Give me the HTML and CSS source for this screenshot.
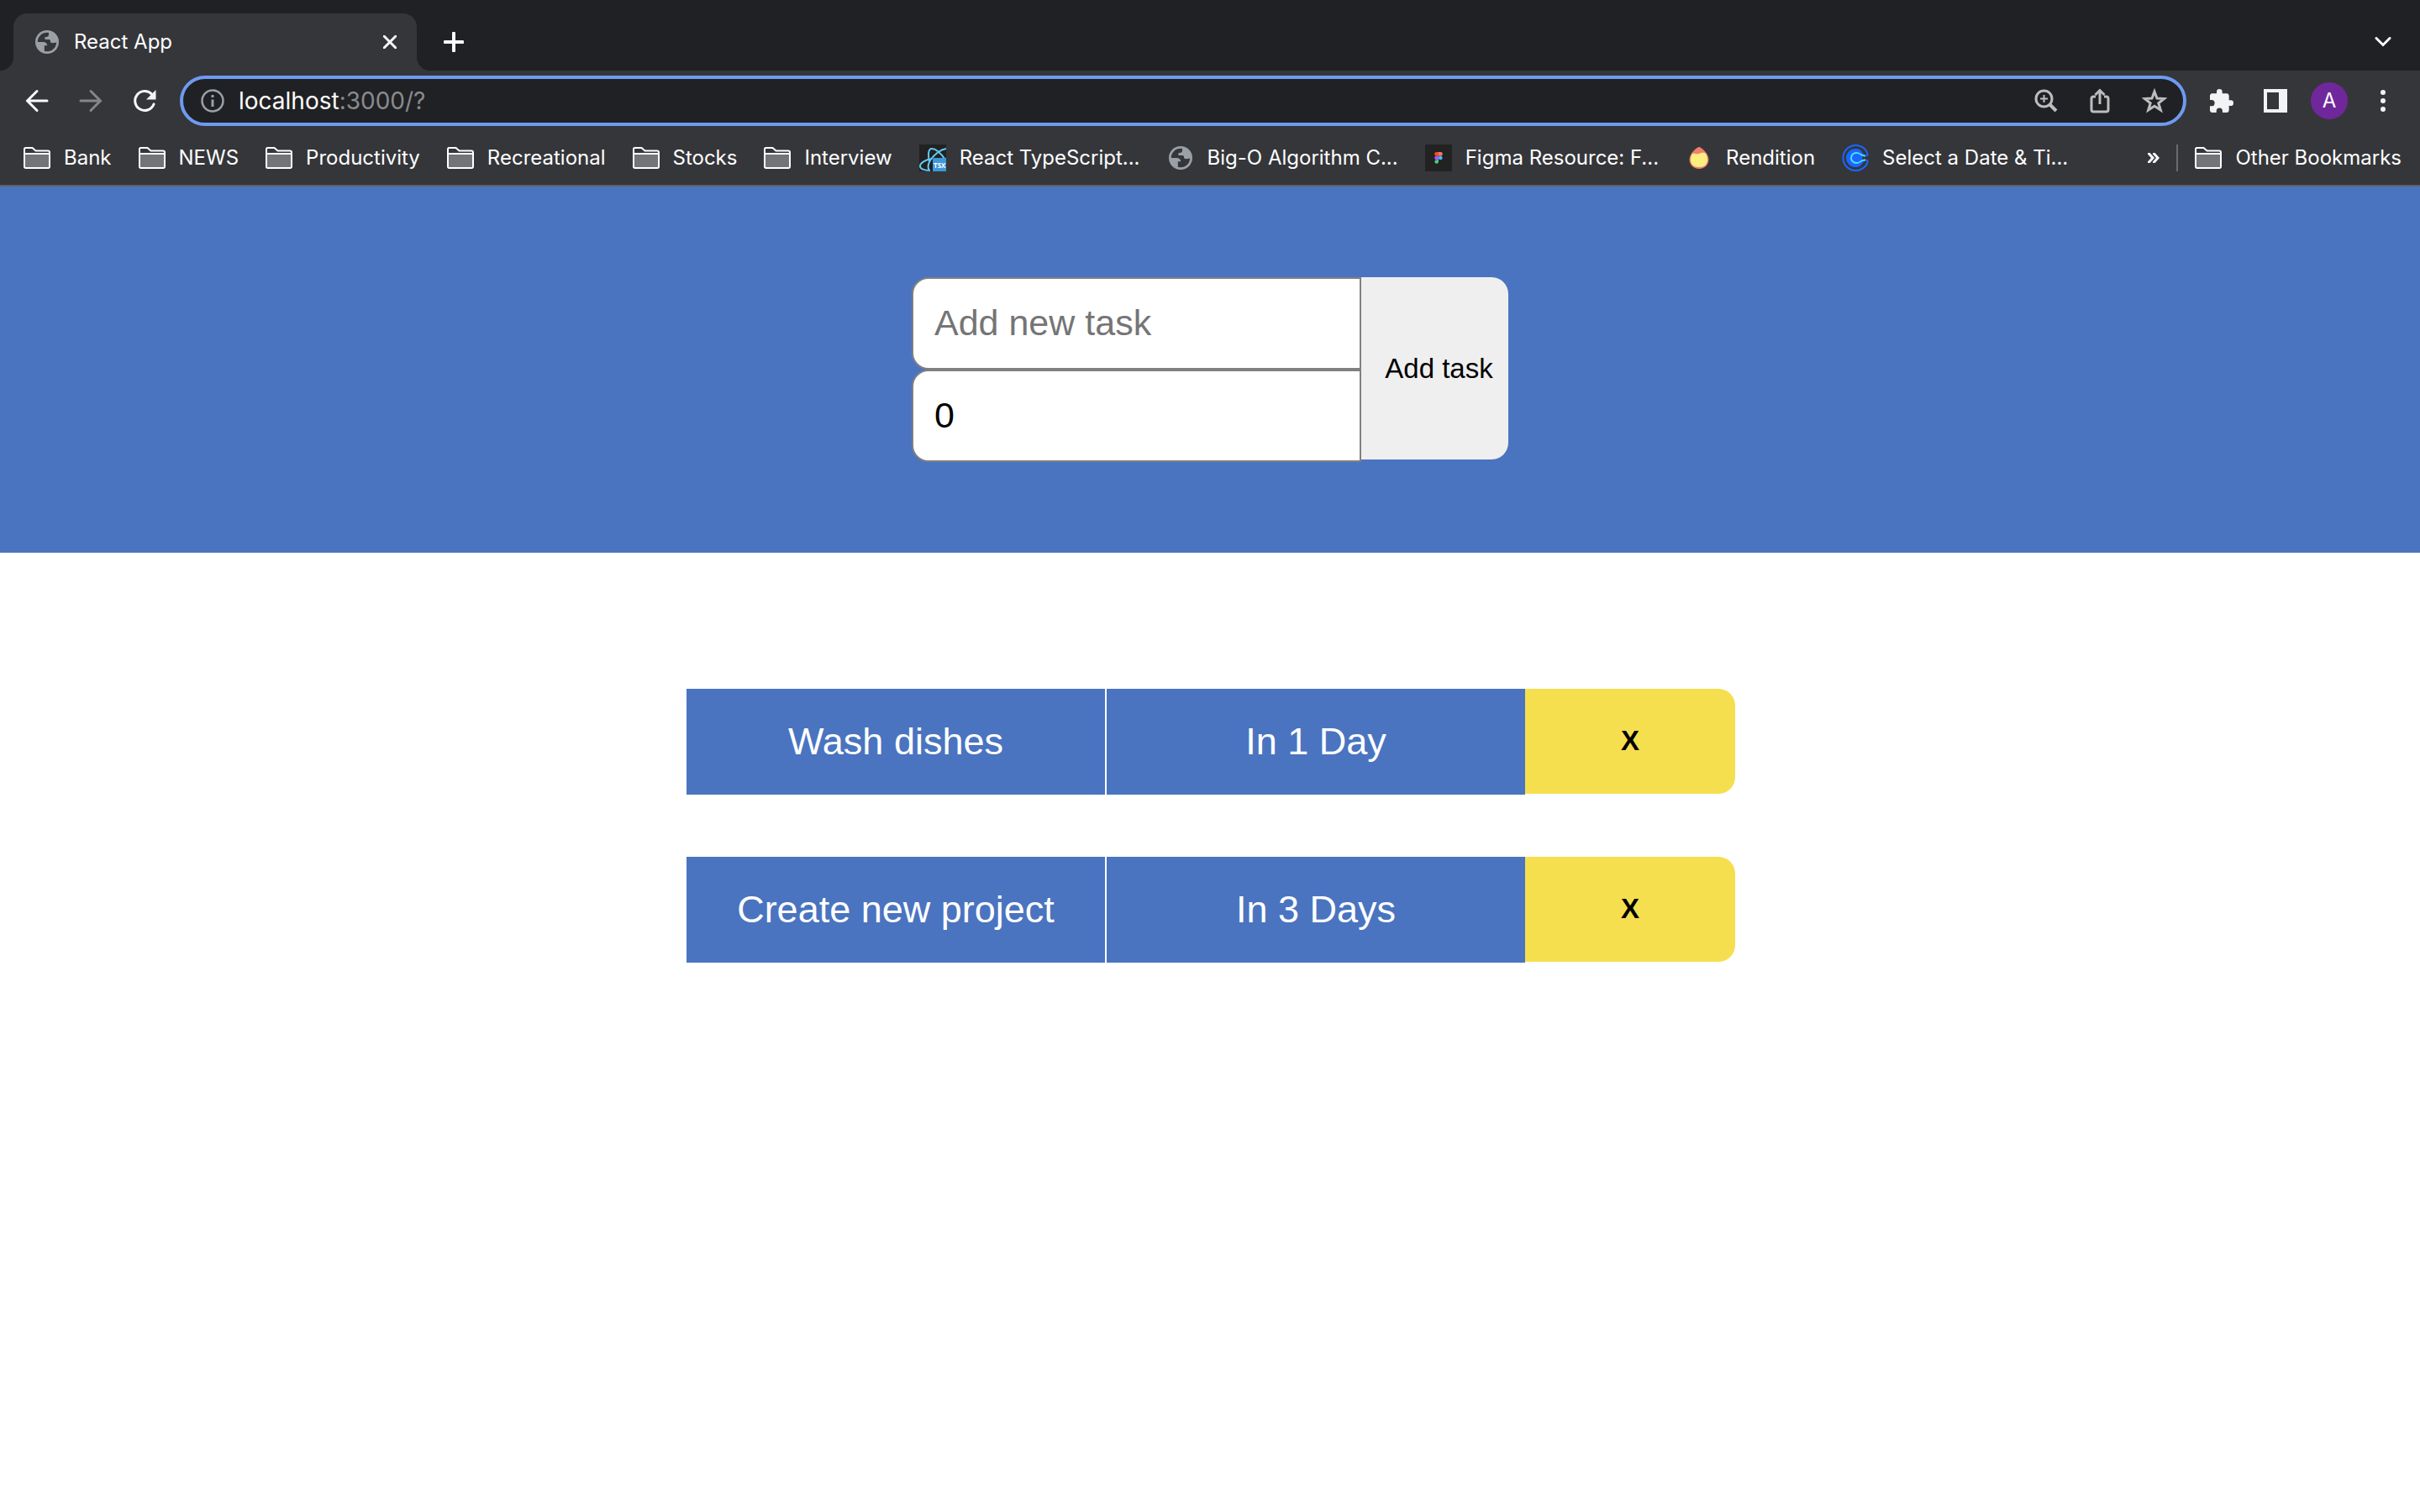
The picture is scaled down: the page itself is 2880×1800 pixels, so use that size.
FILE: index.html
```html
<!DOCTYPE html>
<html lang="en">
<head>
<meta charset="utf-8">
<title>React App</title>
<link rel="stylesheet" href="styles.css">
</head>
<body>
<svg class="sprite" aria-hidden="true">
  <symbol id="folder" viewBox="0 0 32 26">
    <path d="M1 8.500V2.500A1.500 1.500 0 0 1 2.500 1h8l4 3.500H29A2 2 0 0 1 31 6.500v2" fill="none" stroke="#fff" stroke-width="2"/>
    <path d="M1 8h30v15.500A1.500 1.500 0 0 1 29.500 25h-27A1.500 1.500 0 0 1 1 23.500z" fill="#737477" stroke="#fff" stroke-width="2"/>
  </symbol>
  <symbol id="globe" viewBox="0 0 28 28">
    <circle cx="14" cy="14" r="14" fill="#9aa0a6"/>
    <circle cx="14" cy="14" r="11.200" fill="#35363a"/>
    <path d="M2 14h7.500c2.800 0 4.700 1.600 4.700 4.300h-3.400v7.200C6 25 2 20 2 14z" fill="#9aa0a6"/>
    <path d="M16 2v3.200c0 1.600-1 2.800-3 2.800h-1.500v3H16c1.600 0 2 1 2 2.200 0 1.300 1 2 2.500 2 2 0 4-.4 5.500-1.200C26 7.500 22 2.500 16 2z" fill="#9aa0a6"/>
  </symbol>
</svg>

<header class="browser">
  <div class="tabstrip">
    <div class="tab">
      <svg class="tab-icon"><use href="#globe"/></svg>
      <span class="tab-title">React App</span>
      <button class="icon-button" aria-label="Close tab"><svg width="16" height="16" viewBox="0 0 16 16"><path d="M1 1l14 14M15 1L1 15" class="line-white"/></svg></button>
    </div>
    <button class="icon-button new-tab" aria-label="New tab"><svg width="24" height="24" viewBox="0 0 24 24"><path d="M12 1.500v21M1.500 12h21" class="line-white thick"/></svg></button>
    <button class="icon-button tab-search" aria-label="Search tabs"><svg width="20" height="12" viewBox="0 0 20 12"><path d="M2 1.500l8 8 8-8" class="line-white"/></svg></button>
  </div>

  <div class="toolbar">
    <nav class="nav">
      <button class="icon-button" aria-label="Back"><svg width="28" height="28" viewBox="0 0 28 28"><path d="M14 2.500L2.500 14 14 25.500M2.500 14H26" class="line-white"/></svg></button>
      <button class="icon-button" aria-label="Forward" disabled><svg width="28" height="28" viewBox="0 0 28 28"><path d="M14 2.500L25.500 14 14 25.500M25.500 14H2" class="line-white dim"/></svg></button>
      <button class="icon-button" aria-label="Reload"><svg width="28" height="28" viewBox="0 0 28 28"><path d="M25 18A11.500 11.500 0 1 1 22.500 6" class="line-white"/><path d="M27.500 1v11.500H16z" fill="#f1f3f4"/></svg></button>
    </nav>
    <div class="omnibox">
      <svg width="28" height="28" viewBox="0 0 28 28"><circle cx="14" cy="14" r="12.500" fill="none" stroke="#9aa0a6" stroke-width="2.500"/><path d="M12.500 7h3v3h-3zM12.500 12.500h3V21h-3z" fill="#9aa0a6"/></svg>
      <p class="url"><span class="host">localhost</span>:3000/?</p>
      <div class="omnibox-actions">
        <button class="icon-button" aria-label="Zoom"><svg width="28" height="28" viewBox="0 0 28 28"><circle cx="11.500" cy="11.500" r="9.500" class="line-gray"/><path d="M11.500 7v9M7 11.500h9" class="line-gray thin"/><path d="M18.500 18.500l7.500 7.500" class="line-gray heavy"/></svg></button>
        <button class="icon-button" aria-label="Share"><svg width="28" height="30" viewBox="0 0 28 30"><path d="M9 10H6.500A2.500 2.500 0 0 0 4 12.500v13A2.500 2.500 0 0 0 6.500 28h15a2.500 2.500 0 0 0 2.500-2.500v-13a2.500 2.500 0 0 0-2.500-2.500H19M14 19V2.500M8.500 8L14 2.500 19.500 8" class="line-gray"/></svg></button>
        <button class="icon-button" aria-label="Bookmark this page"><svg width="30" height="30" viewBox="0 0 30 30"><path d="M15 4l3 8 8.500.5-6.700 5.300L22.300 26 15 21.300 7.700 26l2.500-8.200L3.500 12.500 12 12z" class="line-gray"/></svg></button>
      </div>
    </div>
    <div class="tools">
      <button class="icon-button" aria-label="Extensions"><svg width="28" height="28" viewBox="2 1 21 21"><path d="M20.500 11H19V7c0-1.100-.9-2-2-2h-4V3.500a2.500 2.500 0 0 0-5 0V5H4c-1.100 0-2 .9-2 2v3.800h1.500a2.700 2.700 0 0 1 0 5.400H2V20c0 1.100.9 2 2 2h3.800v-1.500a2.700 2.700 0 0 1 5.400 0V22H17c1.100 0 2-.9 2-2v-4h1.500a2.500 2.500 0 0 0 0-5z" fill="#f1f3f4"/></svg></button>
      <button class="icon-button" aria-label="Side panel"><svg width="28" height="28" viewBox="0 0 28 28"><path d="M0 0h28v28H0zM4 4v20h14V4z" fill="#f1f3f4" fill-rule="evenodd"/></svg></button>
      <button class="icon-button avatar" aria-label="Profile">A</button>
      <button class="icon-button" aria-label="Menu"><svg width="6" height="26" viewBox="0 0 6 26"><circle cx="3" cy="3" r="3" fill="#f1f3f4"/><circle cx="3" cy="13" r="3" fill="#f1f3f4"/><circle cx="3" cy="23" r="3" fill="#f1f3f4"/></svg></button>
    </div>
  </div>

  <nav class="bookmarks" aria-label="Bookmarks">
    <a class="bookmark" href="#"><svg class="folder"><use href="#folder"/></svg>Bank</a>
    <a class="bookmark" href="#"><svg class="folder"><use href="#folder"/></svg>NEWS</a>
    <a class="bookmark" href="#"><svg class="folder"><use href="#folder"/></svg>Productivity</a>
    <a class="bookmark" href="#"><svg class="folder"><use href="#folder"/></svg>Recreational</a>
    <a class="bookmark" href="#"><svg class="folder"><use href="#folder"/></svg>Stocks</a>
    <a class="bookmark" href="#"><svg class="folder"><use href="#folder"/></svg>Interview</a>
    <a class="bookmark" href="#"><svg width="32" height="32" viewBox="0 0 32 32"><path d="M0 0h32v32H0z" fill="#222"/><g fill="none" stroke="#61c9f2" stroke-width="2"><path d="M32 5C25 6 18 12 13 19c-3 5-3 9-1 12M12 20C10 11 11 5 15 5c5 0 11 6 16 13M15 17C7 18 1 22 1 26c0 3 5 5 12 5"/></g><path d="M18 16h14v16H16V18a2 2 0 0 1 2-2z" fill="#3f97d8"/><text x="17" y="28" class="tsx">TSX</text></svg>React TypeScript...</a>
    <a class="bookmark" href="#"><svg class="site" viewBox="-2 -2 32 32"><use href="#globe" width="28" height="28"/></svg>Big-O Algorithm C...</a>
    <a class="bookmark" href="#"><svg width="32" height="32" viewBox="0 0 32 32"><path d="M0 0h32v32H0z" fill="#222"/><path d="M16 9h-2.500a2.300 2.300 0 0 0 0 4.600H16z" fill="#f24e1e"/><path d="M16 9h2.500a2.300 2.300 0 0 1 0 4.600H16z" fill="#ff7262"/><path d="M16 13.600h-2.500a2.300 2.300 0 0 0 0 4.600H16z" fill="#a259ff"/><circle cx="18.300" cy="15.900" r="2.300" fill="#4fb8f5"/><path d="M16 18.200h-2.500a2.300 2.300 0 1 0 2.500 2.300z" fill="#4fcf7f"/></svg>Figma Resource: F...</a>
    <a class="bookmark" href="#"><svg width="32" height="32" viewBox="0 0 32 32"><path d="M16 3c2 0 11 7 11.500 14.500C27.500 24 23 29 16 29S4.500 24 4.500 17.500C5 10 14 3 16 3z" fill="#f0806c"/><path d="M8 11c2-1 4 1 8 0 3-1 5-2 8 0 1.500 2 2 5 2 7.500 0 5-4 8.500-10 8.500S6 23.500 6 18.500C6 16 6.500 13 8 11z" fill="#fdee80"/></svg>Rendition</a>
    <a class="bookmark" href="#"><svg width="32" height="32" viewBox="0 0 32 32"><path d="M31 12.500A15 15 0 1 0 31 19.500" fill="none" stroke="#1a66ff" stroke-width="2"/><path d="M31 12.500l-3 1.500M31 19.500L28 18" stroke="#1a66ff" stroke-width="2"/><path d="M25 10.500C22.500 6 20 5 16 5a11 11 0 0 0 0 22c4 0 6.500-1 9-5.500L28 19v-6z" fill="#1a66ff"/><path d="M24 14h9v4h-9z" fill="#35363a"/><path d="M28 13.500c-5 1-5.500-3.500-11-3.500a6 6 0 0 0 0 12c5.500 0 6-4.500 11-3.500" fill="none" stroke="#4de0f5" stroke-width="2"/><path d="M18 11c3 0 5 3 7 5-2 2-4 5-7 5z" fill="#1a66ff"/></svg>Select a Date &amp; Ti...</a>
    <button class="icon-button more" aria-label="More bookmarks"><svg width="14" height="12" viewBox="0 0 14 12"><path d="M1.500 1L6 6l-4.500 5M7.500 1L12 6l-4.500 5" class="line-white"/></svg></button>
    <a class="bookmark other" href="#"><svg class="folder"><use href="#folder"/></svg>Other Bookmarks</a>
  </nav>
</header>

<main class="app">
  <form class="task-form">
    <div class="inputs">
      <input class="field" type="text" placeholder="Add new task" aria-label="Task">
      <input class="field" type="text" inputmode="numeric" value="0" aria-label="Days until due">
    </div>
    <button class="add" type="button">Add task</button>
  </form>
  <ul class="tasks">
    <li class="task"><span class="cell">Wash dishes</span><span class="cell">In 1 Day</span><button class="remove" type="button">X</button></li>
    <li class="task"><span class="cell">Create new project</span><span class="cell">In 3 Days</span><button class="remove" type="button">X</button></li>
  </ul>
</main>
</body>
</html>
```
FILE: styles.css
```css
* { box-sizing: border-box; }
body { margin: 0; background: #fff; font-family: Inter, "Liberation Sans", sans-serif; }
button, input { font: inherit; margin: 0; }
svg { display: block; flex: none; }
.sprite { position: absolute; width: 0; height: 0; }

.icon-button { display: flex; align-items: center; justify-content: center; flex: none; padding: 0; border: 0; background: none; color: #fff; }
.line-white { fill: none; stroke: #f8f9fa; stroke-width: 3; stroke-linecap: round; }
.line-white.thick { stroke-width: 4; }
.line-white.dim { stroke: #85868a; }
.line-gray { fill: none; stroke: #bdbdbd; stroke-width: 3; }
.line-gray.thin { stroke-width: 2; }
.line-gray.heavy { stroke-width: 4; }
.tsx { font: bold 8px "Open Sans", sans-serif; fill: #fff; }

.browser { background: #35363a; border-bottom: 2px solid #5e5f61; color: #fff; font-size: 24px; line-height: 32px; }
.tabstrip { display: flex; align-items: flex-end; height: 84px; padding: 0 32px 0 16px; background: #202124; }
.tab { position: relative; display: flex; align-items: center; width: 480px; height: 68px; padding: 0 24px 0 26px; border-radius: 16px 16px 0 0; background: #35363a; }
.tab::before, .tab::after { content: ""; position: absolute; bottom: 0; width: 16px; height: 16px; }
.tab::before { right: 100%; background: radial-gradient(circle at 0 0, #202124 16px, #35363a 16px); }
.tab::after { left: 100%; background: radial-gradient(circle at 100% 0, #202124 16px, #35363a 16px); }
.tab-icon { width: 28px; height: 28px; }
.tab-title { flex: 1; padding-left: 18px; }
.new-tab { width: 24px; height: 68px; margin-left: 32px; }
.tab-search { width: 24px; height: 68px; margin-left: auto; }

.toolbar { display: flex; align-items: center; padding: 6px 22px 0 30px; }
.nav { display: flex; gap: 36px; width: 184px; }
.omnibox { display: flex; align-items: center; flex: 1; height: 60px; padding: 0 19px 0 21px; border: 4px solid #6f9af0; border-radius: 30px; background: #202124; }
.url { flex: 1; margin: 0; padding-left: 17px; font-size: 28px; color: #8a8b8e; }
.host { color: #fff; }
.omnibox-actions { display: flex; gap: 36px; }
.tools { display: flex; align-items: center; padding-left: 20px; }
.tools .icon-button { width: 44px; height: 44px; margin-right: 20px; }
.tools .icon-button:last-child { margin-right: 0; }
.tools .avatar { border-radius: 50%; background: #71279c; font-size: 24px; }

.bookmarks { display: flex; align-items: center; height: 70px; padding: 6px 22px 0 28px; }
.bookmark { display: flex; align-items: center; gap: 16px; margin-right: 32px; color: #fff; text-decoration: none; white-space: nowrap; }
.folder { width: 32px; height: 26px; }
.site { width: 32px; height: 32px; }
.more { margin-left: auto; margin-right: 20px; }
.bookmark.other { margin-right: 0; padding-left: 20px; border-left: 2px solid #6a6b6e; }

.app { font-family: "Liberation Sans", Arial, sans-serif; }
.task-form { display: flex; align-items: flex-start; justify-content: center; padding: 108px 0; background: #4a74c0; }
.inputs { display: flex; flex-direction: column; width: 535px; }
.field { width: 100%; height: 110px; padding: 0 25px 2px; border: 2px solid #808080; border-radius: 20px 0 0 20px; background: #fff; color: #000; font-size: 43px; }
.field::placeholder { color: #757575; opacity: 1; }
.add { width: 175px; height: 217px; padding: 0 0 0 10px; border: 0; border-radius: 0 20px 20px 0; background: #efefef; color: #000; font-size: 33px; }

.tasks { display: flex; flex-direction: column; align-items: center; gap: 74px; margin: 0; padding: 162px 0; list-style: none; }
.task { display: flex; align-items: flex-start; }
.cell { display: flex; align-items: center; justify-content: center; width: 500px; height: 126px; border-left: 2px solid #fff; background: #4a74c0; color: #fff; font-size: 45px; }
.remove { width: 250px; height: 125px; padding: 0 0 2px; border: 0; border-radius: 0 20px 20px 0; background: #f5df4f; color: #000; font-size: 33px; font-weight: 700; }
```
